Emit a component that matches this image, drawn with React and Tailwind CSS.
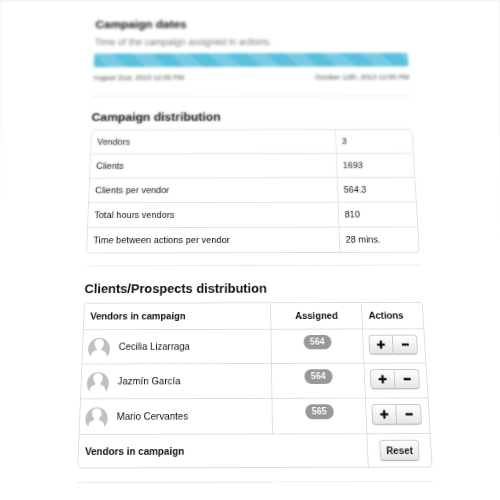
import React from "react";

const distribution = [
  ["Vendors", "3"],
  ["Clients", "1693"],
  ["Clients per vendor", "564.3"],
  ["Total hours vendors", "810"],
  ["Time between actions per vendor", "28 mins."],
];

const vendors = [
  { name: "Cecilia Lizarraga", assigned: 564 },
  { name: "Jazmín García", assigned: 564 },
  { name: "Mario Cervantes", assigned: 565 },
];

const button =
  "flex h-[22px] items-center justify-center border border-[#c8c8c8] border-b-[#b0b0b0] bg-linear-to-b from-white to-[#e6e6e6] text-[#222] shadow-xs";

function Heading({ children }) {
  return <h2 className="mb-1.5 text-[15px] leading-5 font-bold">{children}</h2>;
}

function Divider() {
  return <hr className="mt-3.5 mb-4 border-[#eaeaea]" />;
}

function Avatar() {
  return (
    <svg viewBox="0 0 26 26" className="size-[25px] shrink-0" aria-hidden="true">
      <path
        d="M3.6 24.5A13 13 0 1 1 22.4 24.5C22 20.500 20.800 18.600 18.500 17.800L16.200 16.900C15.700 16.600 15.700 15.500 16 15C17.700 13.300 18.500 11.400 18.500 9C18.500 5.600 16.200 3.800 13 3.800C9.800 3.800 7.500 5.600 7.500 9C7.500 11.400 8.300 13.300 10 15C10.300 15.500 10.300 16.600 9.800 16.900L7.500 17.800C5.200 18.600 4 20.500 3.600 24.500Z"
        fill="#c0c0c0"
      />
    </svg>
  );
}

function Sign({ plus }) {
  return (
    <svg viewBox="0 0 10 10" className="size-2.5" aria-hidden="true">
      <path d={plus ? "M0.500 5H9.500M5 0.500V9.500" : "M1 5H9"} stroke="#111" strokeWidth="2.600" />
    </svg>
  );
}

export default function App() {
  return (
    <main className="relative h-screen overflow-hidden bg-white font-['Liberation_Sans',Arial,sans-serif] text-[11px] text-[#111] perspective-[1200px] perspective-origin-[46%_0%]">
      <div className="mx-auto w-[79%] origin-top [transform:rotateX(21.5deg)_rotateZ(-0.15deg)_scale(0.78)] pt-[23px]">
        <section className="pb-0.5 blur-[1px]">
          <Heading>Campaign dates</Heading>
          <p className="text-xs leading-4 text-[#777]">Time of the campaign assigned in actions.</p>
          <div
            role="progressbar"
            aria-label="Campaign time"
            aria-valuenow={100}
            className="mt-[7px] h-[18px] rounded-[3px] bg-[#5bc0de] bg-[linear-gradient(45deg,rgba(255,255,255,.18)_25%,transparent_25%,transparent_50%,rgba(255,255,255,.18)_50%,rgba(255,255,255,.18)_75%,transparent_75%)] bg-size-[48px_48px]"
          />
          <div className="mt-1.5 flex justify-between text-[9px] leading-4 text-[#444]">
            <span>August 31st, 2013 12:00 PM</span>
            <span>October 12th, 2013 12:00 PM</span>
          </div>
        </section>

        <Divider />

        <section>
          <Heading>Campaign distribution</Heading>
          <table className="w-full table-fixed border-separate border-spacing-0 rounded border border-[#ddd]">
            <colgroup>
              <col className="w-[76%]" />
              <col className="w-[24%]" />
            </colgroup>
            <tbody>
              {distribution.map(([label, value], i) => (
                <tr key={label}>
                  <th
                    scope="row"
                    className={`border-[#ddd] px-[7px] text-left font-normal ${i ? "h-[30px] border-t" : "h-[29px]"}`}
                  >
                    {label}
                  </th>
                  <td className={`border-l border-[#ddd] px-[7px] ${i ? "border-t" : ""}`}>{value}</td>
                </tr>
              ))}
            </tbody>
          </table>
        </section>

        <Divider />

        <section>
          <Heading>Clients/Prospects distribution</Heading>
          <table className="w-full table-fixed border-separate border-spacing-0 rounded border border-[#ddd]">
            <colgroup>
              <col className="w-[55%]" />
              <col className="w-[27%]" />
              <col className="w-[18%]" />
            </colgroup>
            <thead>
              <tr>
                <th className="h-[29px] px-[7px] text-left">Vendors in campaign</th>
                <th className="border-l border-[#ddd] px-[7px] text-center">Assigned</th>
                <th className="border-l border-[#ddd] px-[7px] text-left">Actions</th>
              </tr>
            </thead>
            <tbody>
              {vendors.map(({ name, assigned }) => (
                <tr key={name} className="align-top">
                  <td className="h-[38px] border-t border-[#ddd] px-1.5 pt-1.5">
                    <div className="flex items-center gap-2.5">
                      <Avatar />
                      {name}
                    </div>
                  </td>
                  <td className="border-t border-l border-[#ddd] pt-1.5">
                    <span className="mx-auto block w-8 rounded-full bg-[#999] text-center text-[10px] leading-4 font-bold text-white text-shadow-2xs">
                      {assigned}
                    </span>
                  </td>
                  <td className="border-t border-l border-[#ddd] px-1.5 pt-1.5">
                    <div className="flex">
                      <button aria-label={`Add to ${name}`} className={`${button} w-[28px] rounded-l`}>
                        <Sign plus />
                      </button>
                      <button aria-label={`Remove from ${name}`} className={`${button} w-[28px] rounded-r border-l-0`}>
                        <Sign />
                      </button>
                    </div>
                  </td>
                </tr>
              ))}
            </tbody>
            <tfoot>
              <tr>
                <th scope="row" colSpan={2} className="h-[35px] border-t border-[#ddd] px-[7px] text-left">
                  Vendors in campaign
                </th>
                <td className="border-t border-l border-[#ddd]">
                  <button className={`${button} mx-auto w-[44px] rounded font-bold`}>Reset</button>
                </td>
              </tr>
            </tfoot>
          </table>
        </section>

        <Divider />
      </div>

      {/* soft-focus lens over the far end of the panel */}
      <div className="pointer-events-none absolute inset-x-0 top-0 h-[264px] shadow-[inset_0_1px_3px_#eee] backdrop-blur-[1px] [mask-image:linear-gradient(to_bottom,black_30%,transparent_90%)]" />
    </main>
  );
}
